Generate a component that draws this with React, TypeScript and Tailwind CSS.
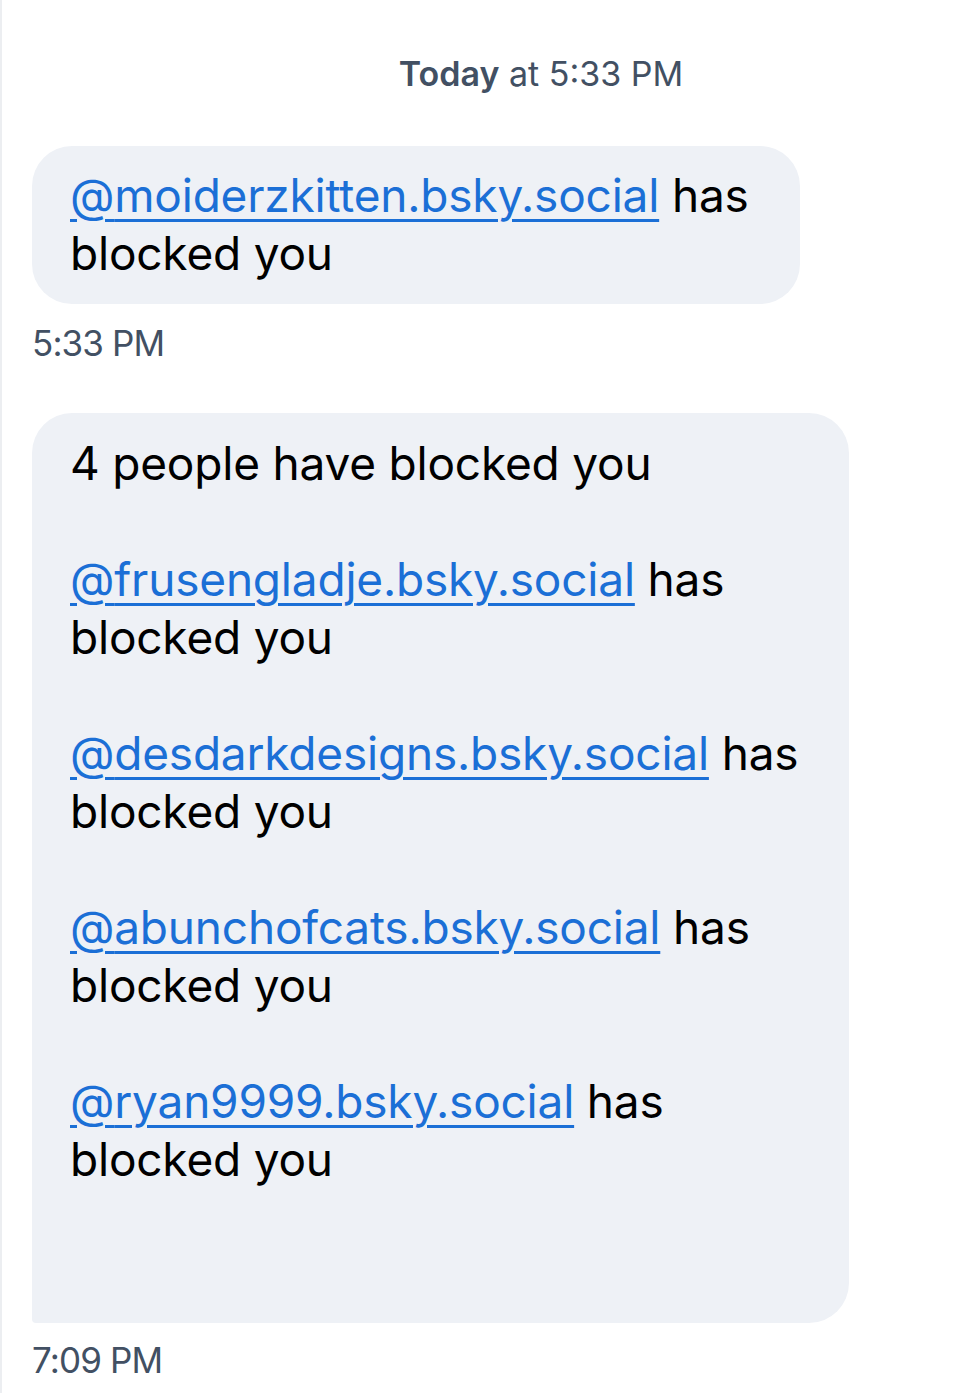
const entries = [
  'frusengladje.bsky.social',
  'desdarkdesigns.bsky.social',
  'abunchofcats.bsky.social',
  'ryan9999.bsky.social',
]

function Handle({ name }: { name: string }) {
  return (
    <a className="text-[#1b6fd6] underline decoration-[3px] underline-offset-[7px]">@{name}</a>
  )
}

export default function App() {
  return (
    <div className="min-h-[1393px] w-[980px] bg-white border-l-2 border-[#eceef1] font-['Inter',sans-serif]">
      <div className="pt-[52px] pl-[100px] text-center text-[34px] text-[#425063] leading-[44px]">
        <span className="font-semibold">Today</span> at 5:33 PM
      </div>

      <div className="pl-[30px] pt-[50px]">
        <div className="w-[768px] rounded-[40px] bg-[#eef1f6] pl-[38px] pr-[20px] pt-[20px] pb-[22px] text-[46px] leading-[58px] text-black tracking-[-0.2px]">
          <Handle name="moiderzkitten.bsky.social" /> has<br />blocked you
        </div>
        <div className="mt-[17px] text-[35px] leading-[44px] text-[#425063] tracking-tight">5:33 PM</div>

        <div className="mt-[48px] w-[817px] rounded-[40px] rounded-bl-[4px] bg-[#eef1f6] pl-[38px] pr-[20px] pt-[21px] pb-[19px] text-[46px] leading-[58px] text-black tracking-[-0.2px]">
          <div>4 people have blocked you</div>
          {entries.map((e) => (
            <div key={e} className="mt-[58px]">
              <Handle name={e} /> has<br />blocked you
            </div>
          ))}
          <div className="h-[116px]" />
        </div>
        <div className="mt-[15px] text-[35px] leading-[44px] text-[#425063] tracking-tight">7:09 PM</div>
      </div>
    </div>
  )
}
